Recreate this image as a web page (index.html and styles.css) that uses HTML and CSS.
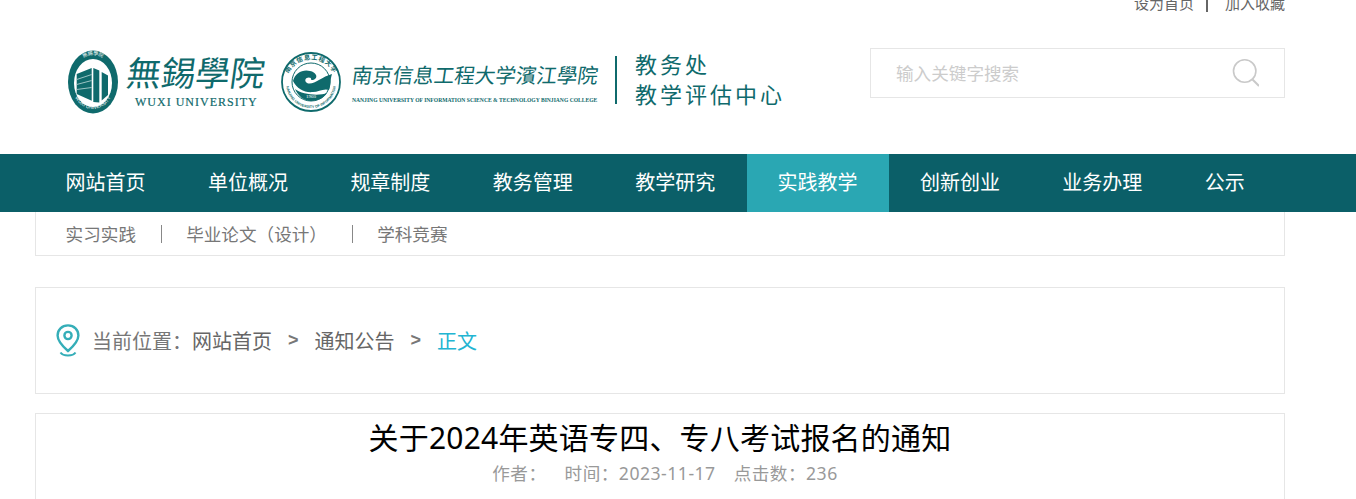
FILE: index.html
```html
<!DOCTYPE html>
<html lang="zh-CN">
<head>
  <meta charset="UTF-8">
  <title>关于2024年英语专四、专八考试报名的通知</title>
  <link rel="stylesheet" href="styles.css">
</head>
<body>
  <div class="wrap">
    <div class="topbar">
      <a>设为首页</a>
      <span class="topbar-sep"></span>
      <a>加入收藏</a>
    </div>

    <div class="header">
      <div class="logo">
        <svg class="emblem-wuxi" width="52" height="64" viewBox="0 0 52 64">
          <ellipse cx="26" cy="32" rx="25" ry="31.5" fill="#0f6a6c"/>
          <ellipse cx="26" cy="33" rx="19" ry="24" fill="#fff"/>
          <path d="M9.7 24 L24.7 18 V50.7 L9.7 44 Z" fill="#0f6a6c"/>
          <path d="M9.7 29 L24.7 24 V25 L9.7 30 Z M9.7 34 L24.7 30 V31 L9.7 35 Z M9.7 39 L24.7 37 V38 L9.7 40 Z" fill="#9cc4c4"/>
          <path d="M26.3 18 L32.3 20.5 V52.5 L26.3 52 Z" fill="#0f6a6c"/>
          <path d="M34.7 22 L41 25.5 V45 L34.7 50.5 Z" fill="#0f6a6c"/>
          <defs>
            <path id="wuxi-arc" d="M3.5 30 A22.5 29 0 0 0 48.5 30"/>
            <path id="wuxi-top" d="M8 20 A19.5 24.5 0 0 1 44 20"/>
          </defs>
          <text class="emblem-en" fill="#fff"><textPath href="#wuxi-arc" startOffset="50%" text-anchor="middle">WUXI UNIVERSITY</textPath></text>
          <text class="emblem-cn" fill="#fff"><textPath href="#wuxi-top" startOffset="50%" text-anchor="middle">無錫學院</textPath></text>
        </svg>
        <div class="logo-wuxi">
          <div class="logo-wuxi-cn">無錫學院</div>
          <div class="logo-wuxi-en">WUXI UNIVERSITY</div>
        </div>
        <svg class="emblem-nuist" width="62" height="62" viewBox="0 0 62 62">
          <circle cx="31" cy="32" r="29" fill="#fff" stroke="#0f6a6c" stroke-width="1.8"/>
          <circle cx="31" cy="32" r="19" fill="#fff" stroke="#0f6a6c" stroke-width="1"/>
          <path d="M13 31 C15 23 23 19 30 21 C36 22 38 27 35 29 C33 31 30 30 31 28 C27 26 23 30 27 33 C33 36 41 27 52 24 C50 30 51 34 49 40 C44 38 38 42 33 42 C25 43 17 39 13 31 Z" fill="#0f6a6c"/>
          <path d="M15 39 C22 45 40 46 47 43 C44 48 38 51 31 51 C24 51 18 46 15 39 Z" fill="#0f6a6c"/>
          <defs>
            <path id="nuist-top" d="M5.5 35 A25.5 25.5 0 0 1 56.5 35"/>
            <path id="nuist-low" d="M6 33 A25 25 0 0 0 56 33"/>
          </defs>
          <text class="emblem-top" fill="#0f6a6c"><textPath href="#nuist-top" startOffset="50%" text-anchor="middle">南京信息工程大学</textPath></text>
          <text class="emblem-low" fill="#0f6a6c"><textPath href="#nuist-low" startOffset="50%" text-anchor="middle">NANJING UNIVERSITY OF INFORMATION</textPath></text>
          <text x="31" y="48" class="emblem-year" fill="#fff" text-anchor="middle">1960</text>
        </svg>
        <div class="logo-nuist">
          <div class="logo-nuist-cn">南京信息工程大学濱江學院</div>
          <div class="logo-nuist-en">NANJING UNIVERSITY OF INFORMATION SCIENCE &amp; TECHNOLOGY BINJIANG COLLEGE</div>
        </div>
        <div class="logo-title">
          <div>教务处</div>
          <div>教学评估中心</div>
        </div>
      </div>
      <div class="search">
        <span class="search-text">输入关键字搜索</span>
        <svg width="27" height="28" viewBox="0 0 27 28" fill="none" stroke="#c9c9c9">
          <circle cx="12.7" cy="12" r="11.2" stroke-width="1.6"/>
          <path d="M20.5 20.5 L27 27" stroke-width="2"/>
        </svg>
      </div>
    </div>

    <div class="nav">
      <a>网站首页</a>
      <a>单位概况</a>
      <a>规章制度</a>
      <a>教务管理</a>
      <a>教学研究</a>
      <a class="active">实践教学</a>
      <a>创新创业</a>
      <a>业务办理</a>
      <a>公示</a>
    </div>

    <div class="subnav">
      <a>实习实践</a>
      <span class="subnav-sep"></span>
      <a>毕业论文（设计）</a>
      <span class="subnav-sep"></span>
      <a>学科竞赛</a>
    </div>

    <div class="crumb">
      <svg width="24" height="33" viewBox="0 0 24 33" fill="none" stroke="#35aeb8">
        <path d="M12 1.4 C5.8 1.4 1.6 5.8 1.6 11.5 C1.6 17.5 8 23.5 12 27 C16 23.5 22.4 17.5 22.4 11.5 C22.4 5.8 18.2 1.4 12 1.4 Z" stroke-width="2.4"/>
        <circle cx="12" cy="11.5" r="3.6" stroke-width="2.4"/>
        <path d="M4.5 28.5 C7 32.5 17 32.5 19.5 28.5" stroke-width="2"/>
      </svg>
      <span class="crumb-label">当前位置：</span>
      <a>网站首页</a>
      <span class="crumb-arrow">&gt;</span>
      <a>通知公告</a>
      <span class="crumb-arrow">&gt;</span>
      <a class="current">正文</a>
    </div>

    <div class="article">
      <h1>关于2024年英语专四、专八考试报名的通知</h1>
      <div class="meta">
        <span>作者：</span>
        <span>时间：2023-11-17</span>
        <span>点击数：236</span>
      </div>
    </div>
  </div>
</body>
</html>
```

FILE: styles.css
```css
html, body { margin: 0; height: 100%; overflow: hidden; background: #fff; }
body { font-family: "Noto Sans", "Noto Sans CJK SC", sans-serif; color: #666; }
a { color: inherit; text-decoration: none; }

.wrap { width: 1250px; margin-left: 35px; }

.topbar { height: 12px; overflow: hidden; display: flex; justify-content: flex-end; align-items: flex-end; font-size: 15px; line-height: 18px; color: #666; }
.topbar-sep { width: 2px; height: 12px; background: #666; margin: 0 17px 0 12px; }

.header { height: 142px; display: flex; justify-content: space-between; }
.logo { display: flex; align-items: flex-start; color: #0f6a6c; padding: 38px 0 0 32px; }
.emblem-wuxi { flex: none; }
.emblem-nuist { flex: none; margin-left: 12px; }
.emblem-en { font-family: "Liberation Sans", sans-serif; font-size: 5px; }
.emblem-cn { font-size: 5px; }
.emblem-top { font-size: 6.4px; font-weight: bold; letter-spacing: .6px; }
.emblem-low { font-family: "Liberation Sans", sans-serif; font-size: 3.6px; font-weight: bold; }
.emblem-year { font-family: "Liberation Serif", serif; font-size: 5px; }

.logo-wuxi { width: 141px; margin-left: 8px; }
.logo-wuxi-cn { font-size: 34.5px; line-height: 45px; transform: skewX(-8deg); white-space: nowrap; }
.logo-wuxi-en { font-family: "Liberation Serif", serif; font-size: 12px; line-height: 14px; letter-spacing: 1px; margin: 0 0 0 8px; white-space: nowrap; color: #0f6a6c; -webkit-text-stroke: .2px #0f6a6c; }

.logo-nuist { width: 250px; margin: 10px 0 0 10px; }
.logo-nuist-cn { font-size: 20.5px; line-height: 30px; transform: skewX(-8deg); white-space: nowrap; }
.logo-nuist-en { font-family: "Liberation Serif", serif; font-weight: bold; font-size: 5.6px; line-height: 8px; margin-top: 6px; white-space: nowrap; }

.logo-title { margin: 6px 0 0 13px; border-left: 2px solid #0f6a6c; height: 48px; padding: 0 0 2px 18px; box-sizing: border-box; display: flex; flex-direction: column; justify-content: center; font-size: 22px; line-height: 30px; letter-spacing: 3px; white-space: nowrap; }

.search { width: 363px; height: 48px; margin-top: 36px; border: 1px solid #e6e6e6; display: flex; align-items: center; justify-content: space-between; padding: 0 25px; }
.search-text { font-size: 17.6px; color: #ccc; padding-bottom: 2px; }

.nav { height: 58px; background: #0b5f68; display: flex; margin-left: -35px; margin-right: -71px; padding-left: 35px; }
.nav a { width: 142.4px; box-sizing: border-box; padding-left: 30.6px; font-size: 20px; line-height: 58px; color: #fff; white-space: nowrap; }
.nav a.active { background: #2aa7b3; }

.subnav { height: 43px; border: 1px solid #e6e6e6; border-top: 0; display: flex; align-items: center; padding-left: 29.6px; font-size: 17.6px; color: #777; }
.subnav-sep { width: 1px; height: 18px; background: #888; margin: 0 24.6px; }

.crumb { height: 105px; margin-top: 31px; border: 1px solid #e6e6e6; display: flex; align-items: center; padding-left: 20px; font-size: 20px; color: #666; }
.crumb svg { margin-right: 12px; }
.crumb-label { color: #777; }
.crumb-arrow { font-family: "Liberation Sans", sans-serif; font-size: 18px; font-weight: bold; margin: 0 16px; color: #777; }
.current { color: #22b5d2; }

.article { margin-top: 19px; height: 300px; border: 1px solid #e6e6e6; text-align: center; }
.article h1 { margin: 1px 0 0; font-size: 30px; line-height: 46px; font-weight: normal; letter-spacing: .2px; color: #000; }
.meta { font-size: 17.6px; line-height: 24px; letter-spacing: .5px; color: #999; display: flex; justify-content: center; gap: 18px; padding-left: 10px; }
```
